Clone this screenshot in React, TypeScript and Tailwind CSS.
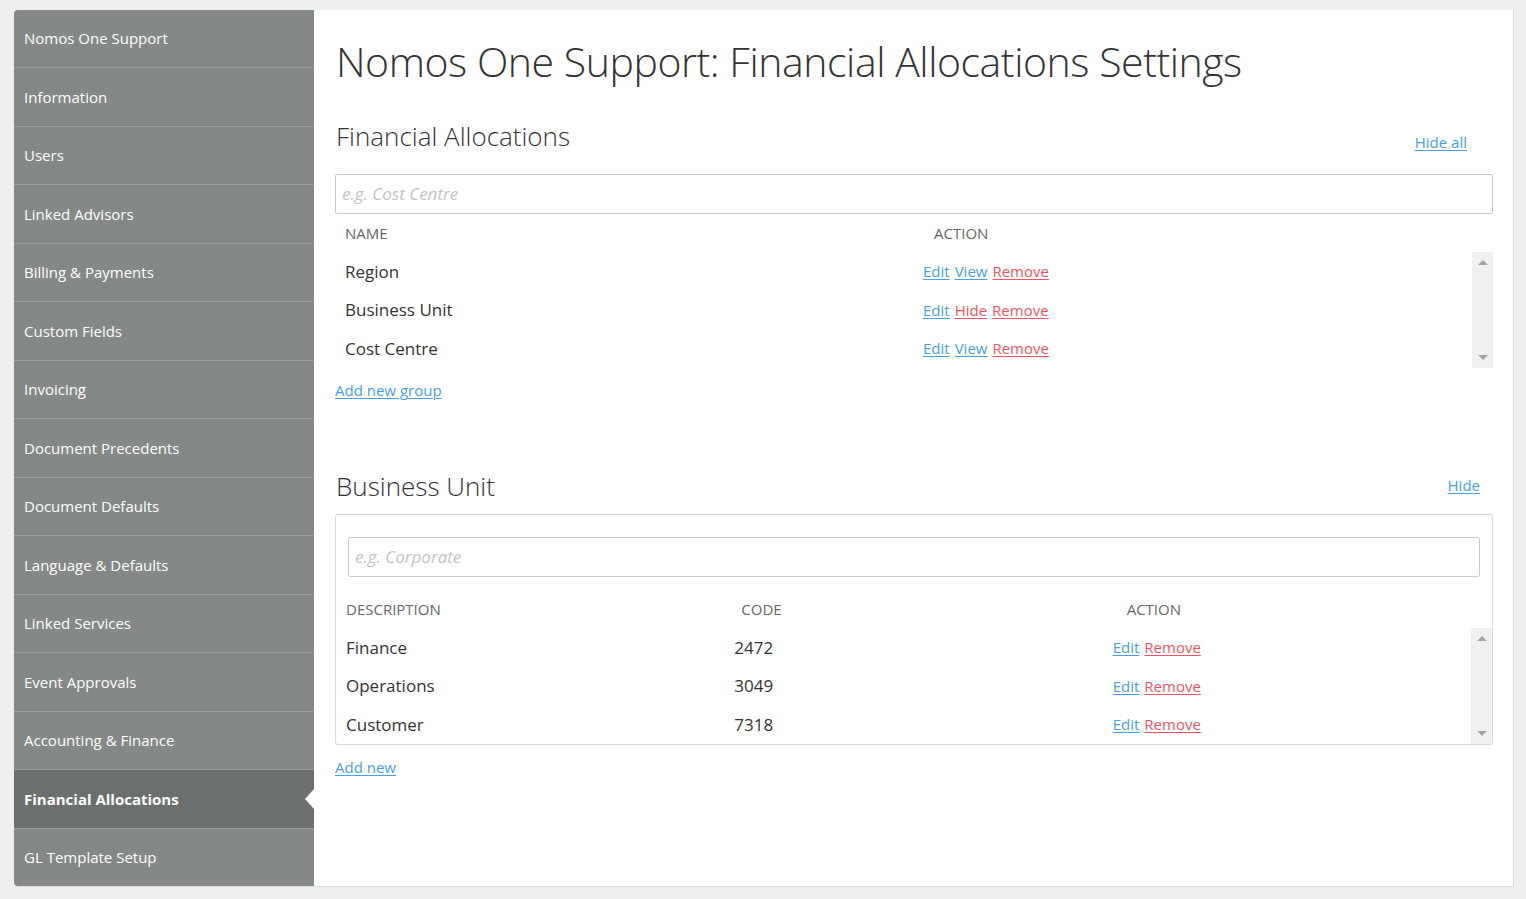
import React from "react";

const navItems = [
  "Nomos One Support",
  "Information",
  "Users",
  "Linked Advisors",
  "Billing & Payments",
  "Custom Fields",
  "Invoicing",
  "Document Precedents",
  "Document Defaults",
  "Language & Defaults",
  "Linked Services",
  "Event Approvals",
  "Accounting & Finance",
  "Financial Allocations",
  "GL Template Setup",
];

const blue = "text-[#4a9fe2] underline underline-offset-2 decoration-1";
const red = "text-[#ee5563] underline underline-offset-2 decoration-1";

function ScrollBar() {
  return (
    <div className="w-[21px] bg-[#f0f0f0] flex flex-col items-center justify-between py-[8px]">
      <div className="w-0 h-0 border-l-[5px] border-r-[5px] border-b-[5px] border-l-transparent border-r-transparent border-b-[#a5a5a5]" />
      <div className="w-0 h-0 border-l-[5px] border-r-[5px] border-t-[5px] border-l-transparent border-r-transparent border-t-[#a5a5a5]" />
    </div>
  );
}

export default function App() {
  return (
    <div
      className="min-h-[899px] w-full bg-[#efefef] pt-[10px] pl-[14px] pr-[12px]"
      style={{ fontFamily: "'Open Sans', 'Liberation Sans', sans-serif" }}
    >
      <div className="flex h-[877px] border-r border-b border-[#dcdcdc] rounded-l-[4px]">
        {/* Sidebar */}
        <div className="w-[300px] flex flex-col bg-[#848887] rounded-l-[4px] overflow-visible">
          {navItems.map((item, i) => {
            const active = item === "Financial Allocations";
            return (
              <div
                key={item}
                className={`relative flex-1 flex items-center pl-[10px] text-[15px] text-white ${
                  i < navItems.length - 1 ? "border-b border-[#9a9d9c]" : ""
                } ${active ? "bg-[#6b6f6e] font-bold" : ""} ${i === 0 ? "rounded-tl-[4px]" : ""} ${
                  i === navItems.length - 1 ? "rounded-bl-[4px]" : ""
                }`}
              >
                {item}
                {active && (
                  <div className="absolute right-0 top-1/2 -translate-y-1/2 w-0 h-0 border-t-[10px] border-b-[10px] border-r-[9px] border-t-transparent border-b-transparent border-r-white" />
                )}
              </div>
            );
          })}
        </div>

        {/* Main */}
        <div className="flex-1 bg-white pl-[21px] pr-[20px] pt-[27px] text-[#333]">
          <h1 className="text-[41px] font-light leading-[48px] tracking-[-0.45px] ml-[1px]">
            Nomos One Support: Financial Allocations Settings
          </h1>

          {/* Financial Allocations */}
          <div className="flex justify-between mt-[33px]">
            <h2 className="text-[26px] font-light leading-[36px] ml-[1px]">Financial Allocations</h2>
            <a className={`${blue} text-[15px] leading-[20px] mt-[14px] mr-[26px]`}>Hide all</a>
          </div>
          <div className="mt-[20px] h-[40px] border border-[#cccccc] rounded-[2px] flex items-center pl-[6px]">
            <span className="italic text-[17px] text-[#c4c4c4]">e.g. Cost Centre</span>
          </div>
          <div className="flex h-[38px] items-center text-[15px] text-[#666] uppercase">
            <div className="w-[599px] pl-[10px]">Name</div>
            <div>Action</div>
          </div>
          <div className="flex h-[116px]">
            <div className="flex-1 flex flex-col">
              {[
                ["Region", "View"],
                ["Business Unit", "Hide"],
                ["Cost Centre", "View"],
              ].map(([name, v]) => (
                <div key={name} className="flex-1 flex items-center">
                  <div className="w-[588px] pl-[10px] text-[17px]">{name}</div>
                  <div className="flex gap-[5px] text-[15px]">
                    <a className={blue}>Edit</a>
                    <a className={v === "Hide" ? red : blue}>{v}</a>
                    <a className={red}>Remove</a>
                  </div>
                </div>
              ))}
            </div>
            <ScrollBar />
          </div>
          <div className="mt-[12px] text-[15px] leading-[20px]">
            <a className={blue}>Add new group</a>
          </div>

          {/* Business Unit */}
          <div className="flex justify-between mt-[68px]">
            <h2 className="text-[26px] font-light leading-[36px] ml-[1px]">Business Unit</h2>
            <a className={`${blue} text-[15px] leading-[20px] mt-[7px] mr-[13px]`}>Hide</a>
          </div>
          <div className="mt-[10px] border border-[#d6d9df] rounded-[3px] pt-[22px]">
            <div className="mx-[12px] h-[40px] border border-[#cccccc] rounded-[2px] flex items-center pl-[6px]">
              <span className="italic text-[17px] text-[#c4c4c4]">e.g. Corporate</span>
            </div>
            <div className="mt-[13px] grid grid-cols-3 h-[38px] items-center text-[15px] text-[#666] uppercase">
              <div className="pl-[10px]">Description</div>
              <div className="pl-[20px]">Code</div>
              <div className="pl-[20px]">Action</div>
            </div>
            <div className="flex h-[116px]">
              <div className="flex-1 flex flex-col">
                {[
                  ["Finance", "2472"],
                  ["Operations", "3049"],
                  ["Customer", "7318"],
                ].map(([d, c]) => (
                  <div key={d} className="flex-1 grid grid-cols-3 items-center text-[17px]">
                    <div className="pl-[10px]">{d}</div>
                    <div className="pl-[20px]">{c}</div>
                    <div className="pl-[20px] flex gap-[5px] text-[15px]">
                      <a className={blue}>Edit</a>
                      <a className={red}>Remove</a>
                    </div>
                  </div>
                ))}
              </div>
              <ScrollBar />
            </div>
          </div>
          <div className="mt-[12px] text-[15px] leading-[20px]">
            <a className={blue}>Add new</a>
          </div>
        </div>
      </div>
    </div>
  );
}
